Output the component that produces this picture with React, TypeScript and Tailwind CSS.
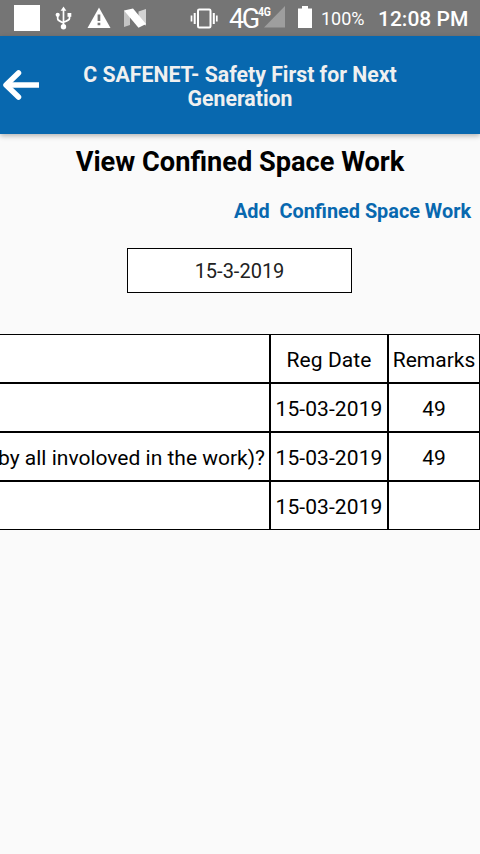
import React from "react";

type Row = { detail: string; date: string; remarks: string };

const rows: Row[] = [
  { detail: "", date: "Reg Date", remarks: "Remarks" },
  { detail: "", date: "15-03-2019", remarks: "49" },
  { detail: "by all involoved in the work)?", date: "15-03-2019", remarks: "49" },
  { detail: "", date: "15-03-2019", remarks: "" },
];

function UsbIcon() {
  return (
    <svg className="ml-[15px] h-6 w-[18px] shrink-0" viewBox="0 0 18 24" fill="none" stroke="#fff" strokeWidth="1.7">
      <path d="M8.500 3v18M2.700 9v3.700c0 1.500 1 2 5.800 4.200M14.500 9v3.200c0 1.500-1 2-6 4" />
      <path d="M8.500 .5l2.900 4.200H5.600z" fill="#fff" stroke="none" />
      <circle cx="2.700" cy="8.800" r="2.100" fill="#fff" stroke="none" />
      <path d="M12.500 7h3.800v3.800h-3.800z" fill="#fff" stroke="none" />
      <circle cx="8.500" cy="20.700" r="2.700" fill="#fff" stroke="none" />
    </svg>
  );
}

function WarningIcon() {
  return (
    <svg className="ml-[14px] h-6 w-6 shrink-0" viewBox="0 0 24 24">
      <path d="M.5 22L12 1.500 23.500 22z" fill="#fff" />
      <path d="M10.600 8.500h2.700v6.500h-2.700zM10.600 16.700h2.700v2.600h-2.700z" fill="#757575" />
    </svg>
  );
}

function NougatIcon() {
  return (
    <svg className="ml-3 h-6 w-6 shrink-0" viewBox="0 0 24 24">
      <path d="M1 4.500l6 3v11.500L1 21z" fill="#c4c4c4" />
      <path d="M23 3l-7.500 2.500v11l7.500 3z" fill="#d2d2d2" />
      <path d="M1 4.500L10 2.500 23 18 15.500 21.700z" fill="#fff" />
    </svg>
  );
}

function VibrateIcon() {
  return (
    <svg className="ml-[43px] h-6 w-7 shrink-0" viewBox="0 0 28 24" fill="none" stroke="#fff">
      <rect x="8" y="3.500" width="12.500" height="18" rx="1.200" strokeWidth="2" />
      <path d="M4.700 7v11M23.800 7v11" strokeWidth="2" />
      <path d="M1.500 9.500v6M26.800 9.500v6" strokeWidth="1.700" />
    </svg>
  );
}

function StatusBar() {
  return (
    <div className="flex h-9 shrink-0 items-center overflow-hidden bg-[#757575] text-white">
      <div className="ml-3.5 h-[26px] w-[26px] shrink-0 bg-white" />
      <UsbIcon />
      <WarningIcon />
      <NougatIcon />
      <VibrateIcon />
      <div className="ml-[11px] flex h-9 w-[56px] shrink-0">
        <span className="w-[29px] pt-[3px] text-[27px] leading-8 tracking-[-2.3px]">4G</span>
        <span className="mt-[5px] h-[13px] w-[13px] shrink-0 scale-y-[1.250] text-[10.500px] font-bold leading-[13px] tracking-[-0.300px]">4G</span>
      </div>
      <svg className="-ml-[21px] h-6 w-[21px] shrink-0" viewBox="0 0 21 24">
        <path d="M21 0v21.500H0z" fill="#9e9e9e" />
      </svg>
      <svg className="ml-[13px] h-6 w-3.5 shrink-0" viewBox="0 0 14 24">
        <path d="M4 0h6v2.500h4v19.500H0V2.500h4z" fill="#fff" />
      </svg>
      <span className="ml-[9px] w-[57px] shrink-0 pt-px text-[18px] leading-9">100%</span>
      <span className="whitespace-nowrap pt-px text-[21px] font-medium leading-9">12:08 PM</span>
    </div>
  );
}

export default function App() {
  return (
    <div className="flex h-[854px] w-[480px] flex-col overflow-hidden bg-[#fafafa] font-['Roboto',sans-serif] text-black">
      <StatusBar />
      <header className="flex h-[98px] shrink-0 items-center bg-[#0868af] shadow-[0_2px_5px_rgba(0,0,0,0.28)]">
        <svg className="ml-[3px] h-[30px] w-9 shrink-0" viewBox="0 0 36 30" fill="none" stroke="#fff" strokeLinejoin="round">
          <path d="M15.500 3L3 15l12.500 12" strokeWidth="5.500" strokeLinecap="round" />
          <path d="M4 15h32" strokeWidth="5.500" />
        </svg>
        <h1 className="ml-[36px] w-[330px] pt-1 text-center text-[21.250px] font-bold leading-6 text-[#f0f0f0]">
          C SAFENET- Safety First for Next Generation
        </h1>
      </header>
      <main className="flex flex-col">
        <h2 className="mt-3 text-center text-[27.200px] font-bold leading-8">View Confined Space Work</h2>
        <a className="mr-[9px] mt-[22px] self-end whitespace-pre text-[19.850px] font-bold leading-6 text-[#0868af]">{"Add  Confined Space Work"}</a>
        <div className="ml-[127px] mt-[24px] h-[45px] w-[225px] border border-black bg-white text-center text-[20px] leading-[44px] text-[#212121]">
          15-3-2019
        </div>
        <div className="mt-[41px] flex flex-col text-[21px] leading-[51px]">
          {rows.map((row, i) => (
            <div key={i} className="flex h-[49px] whitespace-nowrap text-center">
              <div className="flex w-[270px] shrink-0 justify-end border border-l-0 border-black bg-white pr-1">{row.detail}</div>
              <div className="w-[118px] shrink-0 border border-black bg-white tracking-[0.080px]">{row.date}</div>
              <div className="w-[92px] shrink-0 border border-black bg-white">{row.remarks}</div>
            </div>
          ))}
        </div>
      </main>
    </div>
  );
}
